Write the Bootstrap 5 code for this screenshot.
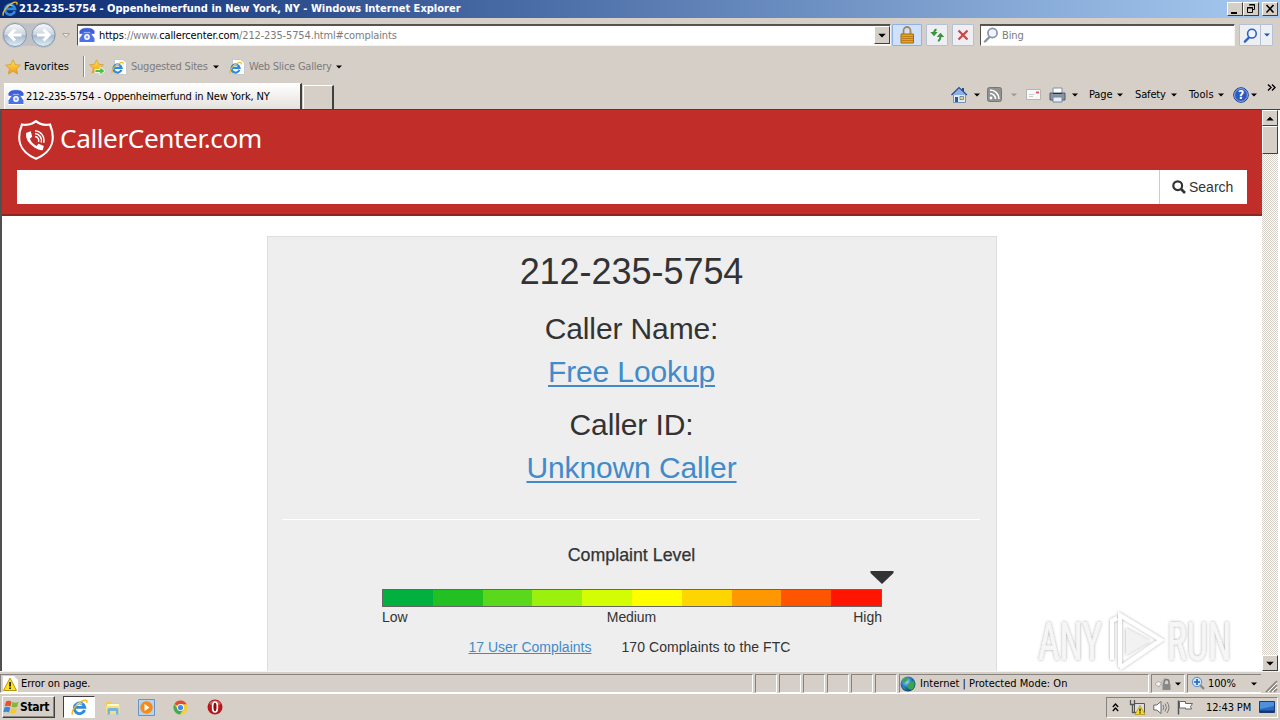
<!DOCTYPE html>
<html lang="en">
<head>
<meta charset="utf-8">
<meta name="viewport" content="width=device-width, initial-scale=1">
<title>212-235-5754 - Oppenheimerfund in New York, NY</title>
<link href="https://cdn.jsdelivr.net/npm/bootstrap@5.3.0/dist/css/bootstrap.min.css" rel="stylesheet">
<style>
:root{--face:#d5cfc8;--ui:"DejaVu Sans Condensed","DejaVu Sans",sans-serif}
body{width:1280px;height:720px;background:var(--face);font:11px/14px var(--ui);font-stretch:condensed;color:#000;letter-spacing:-.14px;white-space:nowrap;overflow:hidden}
svg{display:block;flex:none}
.fx{flex:none}
.titlebar{height:18px;background:linear-gradient(90deg,#0a2a72,#a6caf0);color:#fff;font-weight:700;padding-left:2px;padding-right:2px;letter-spacing:0}
.winbtn{width:16px;height:14px;background:var(--face);border:1px solid;border-color:#fff #404040 #404040 #fff}
.navrow{height:34px;padding-left:2px}
.sunk{border:1px solid;border-color:#55524e #f4f2ee #f4f2ee #55524e;box-shadow:inset 0 1px #555;background:#fff}
.addr{width:814px;height:22px;margin-left:7px}
.dim{color:#7c7c7c}
.raised{background:var(--face);border:1px solid;border-color:#fff #404040 #404040 #fff}
.toolbtn{height:22px;border:1px solid #b5c0d2;background:#edeff2;border-radius:1px}
.favrow{height:28px;padding-left:5px;padding-top:1px}
.tabrow{height:29px;padding-left:4px}
.tab-on{width:298px;height:26px;background:linear-gradient(#fff,#e4e1dd);border-right:2px solid #404040;border-left:1px solid #fff;border-top:1px solid #fff}
.tab-new{width:31px;height:24px;margin-left:1px;border:solid;border-width:1px 2px 0 1px;border-color:#fff #404040 #fff #fff}
.lbl{display:block;flex:none}
.viewport-box{height:562px;border-top:1px solid #404040;border-left:2px solid #505050;background:#fff;font-family:"Liberation Sans",Arial,sans-serif;letter-spacing:0;color:#333}
.site{width:1260px;overflow:hidden}
.masthead{height:106px;background:#c12e2a;border-bottom:2px solid #8e2522;padding:10px 15px 0}
.brandname{font:26.2px/36px "Noto Sans","Open Sans",sans-serif;letter-spacing:-.42px;color:#fff;margin:0 0 4px 5px}
.searchline{margin-top:10px;height:34px;background:#fff}
.searchbtn{width:88px;border-left:1px solid #ccc;font-size:14px;color:#333}
.report{width:730px;height:460px;margin:20px 0 0 265px;background:#eee;border:1px solid #ddd;padding:0 16px 0 15px;text-align:center}
.report a{color:#428bca}
.num{font-size:36px;line-height:40px;margin:15px 0 0;letter-spacing:-.04px}
.h30{font-size:30px;line-height:43px;text-underline-offset:3px;letter-spacing:-.12px}
.h30 a{text-decoration-thickness:2px}
.rule{height:1px;background:#fff;margin-top:30px}
.meter{width:500px;height:18px;border:1px solid #666;margin:0 0 0 99px}
.meter span{flex:1}
.f14{font-size:14px;line-height:20px}
.scroller{width:16px;background:repeating-conic-gradient(#fff 0 25%,#d5cfc8 0 50%) 0 0/2px 2px}
.statusrow{height:23px;border-top:1px solid #f5f3f0;padding-top:2px;border-bottom:1px solid #fff}
.cell{height:19px;border:1px solid;border-color:#87837e #fff #fff #87837e;margin-right:2px}
.taskrow{height:26px;padding-left:2px;padding-top:0}
.start{width:53px;height:22px;font-weight:700;font-size:12px;letter-spacing:-.3px;box-shadow:inset -1px -1px #8a8680}
.active-task{width:32px;height:22px;margin-left:8px;background:#fff;border:1px solid;border-color:#404040 #fff #fff #404040}
.tray{width:172px;height:21px;border:1px solid;border-color:#87837e #fff #fff #87837e}
.mark-any{position:absolute;left:1030px;top:604px}
</style>
</head>
<body class="d-flex flex-column">
<svg width="0" height="0" class="position-absolute">
<defs>
<linearGradient id="blueball" x1="0" y1="0" x2="0" y2="1"><stop offset="0" stop-color="#f8fafc"/><stop offset=".48" stop-color="#c9d3df"/><stop offset=".52" stop-color="#a9b9cc"/><stop offset="1" stop-color="#dcf0fa"/></linearGradient>
<linearGradient id="gold" x1="0" y1="0" x2="0" y2="1"><stop offset="0" stop-color="#ffe45a"/><stop offset="1" stop-color="#f09a10"/></linearGradient>
<radialGradient id="globe" cx=".4" cy=".35" r=".7"><stop offset="0" stop-color="#9ad4f8"/><stop offset=".5" stop-color="#2878c0"/><stop offset="1" stop-color="#0c3c70"/></radialGradient>
<symbol id="e" viewBox="0 0 16 16"><path d="M12.8 10.3A5 5 0 1 1 13 7.900H4.400" fill="none" stroke="#2f8ade" stroke-width="2.700"/><path d="M1.400 14.600C-.3 11.600 5.600 3.400 12 1.400c2.600-.8 3.600.2 2.700 2.200" fill="none" stroke="#f2b81e" stroke-width="1.400"/><path d="M5 5.200a4.500 4.500 0 0 1 5.500-.5" stroke="#9cd6f8" fill="none"/></symbol>
<symbol id="epage" viewBox="0 0 16 16"><path d="M3.500.500h8l4 3v12h-12z" fill="#fff" stroke="#c8c8c8"/><use href="#e" x="0" y="2.500" width="13" height="13"/></symbol>
<symbol id="phone" viewBox="0 0 16 16"><path d="M0 0h16v16H0z" fill="#fff"/><path d="M.8 6.500V4.200Q2 1.200 8 1.200t7.200 3v2.300h-3.700V4.700h-7v1.800z" fill="#3c5fe0" stroke="#2440b8" stroke-width=".5"/><path d="M4.500 5.500h7l4 6V15H.5v-3.500z" fill="#4c70ea"/><circle cx="8" cy="10" r="2.900" fill="#fff"/><circle cx="8" cy="10" r="1.400" fill="#87a3f5"/></symbol>
<symbol id="star" viewBox="0 0 16 16"><path d="M8 .8l2.200 4.800 5.200.6-3.900 3.500 1.100 5.300L8 12.300 3.400 15l1.100-5.300L.6 6.200l5.200-.6z" fill="url(#gold)" stroke="#d89a2a" stroke-width=".8"/></symbol>
<symbol id="dn" viewBox="0 0 6 4"><path d="M0 .5h6L3 3.500z"/></symbol>
<symbol id="lens" viewBox="0 0 16 16"><path d="M7 9.500L2 14.500" stroke="currentColor" stroke-width="2.400" stroke-linecap="round"/><circle cx="9.500" cy="6" r="4.600" fill="#eef5fd" stroke="currentColor" stroke-width="1.700"/></symbol>
</defs>
</svg>

<header class="titlebar fx d-flex align-items-center">
<svg width="16" height="16"><use href="#e"/></svg>
<span class="lbl" style="margin-left:1px">212-235-5754 - Oppenheimerfund in New York, NY - Windows Internet Explorer</span>
<div class="ms-auto d-flex fx">
<div class="winbtn"><svg width="14" height="12"><path d="M3 9h6v2H3z"/></svg></div>
<div class="winbtn"><svg width="14" height="12"><path d="M5.500 1.500h5v5h-2M5 2h6M3.500 4.500h5v5h-5zM3 5h6" fill="none" stroke="#000"/></svg></div>
<div class="winbtn" style="margin-left:3px"><svg width="14" height="12"><path d="M3.500 2l7 7.500M10.500 2l-7 7.500" stroke="#000" stroke-width="1.600"/></svg></div>
</div>
</header>

<nav class="navrow fx d-flex align-items-center">
<svg width="54" height="30" viewBox="0 0 54 30"><path d="M13 2q14 3 28 0a13 13 0 0 1 0 26q-14-5-28 0A13 13 0 0 1 13 2z" fill="#bfc1c5"/><g fill="url(#blueball)" stroke="#8797aa"><circle cx="13" cy="15" r="11.500"/><circle cx="41.500" cy="15" r="11.500"/></g><g fill="none" stroke="#fff" stroke-width="3"><path d="M19.500 15H8M13 9.500L7.500 15l5.500 5.500M35 15h11.500M41.500 9.500L47 15l-5.500 5.500"/></g></svg>
<svg width="8" height="5" viewBox="0 0 8 5" style="margin-left:6px"><path d="M.5.500h7L4 4.500z" fill="#e8e6e2" stroke="#a8a6a2"/></svg>
<div class="addr sunk fx d-flex align-items-center ps-1">
<svg width="16" height="16" style="margin-left:-3px"><use href="#phone"/></svg>
<span class="lbl" style="margin:2px 0 0 4px"><span>https</span><span class="dim">://www.</span><span>callercenter.com</span><span class="dim">/212-235-5754.html#complaints</span></span>
<div class="raised ms-auto d-flex align-items-center justify-content-center fx" style="width:16px;height:18px"><svg width="8" height="5"><use href="#dn"/></svg></div>
</div>
<div class="toolbtn fx d-flex align-items-center justify-content-center" style="width:30px;margin-left:1px;background:#cfe1fb;border-color:#8eb2e8"><svg width="16" height="18" viewBox="0 0 16 18"><path d="M4.500 8V4.500a3.500 3.500 0 0 1 7 0V8" fill="none" stroke="#a08a5c" stroke-width="1.800"/><path d="M2 8h12.500v9H2z" fill="#eaa420" stroke="#a06a10"/><path d="M2.500 10.500h11.500M2.500 12.500h11.500M2.500 14.500h11.500" stroke="#bf7d14"/></svg></div>
<div class="toolbtn fx d-flex align-items-center justify-content-center" style="width:22px;margin-left:4px"><svg width="14" height="14" viewBox="0 0 14 14"><g fill="none" stroke="#3a9440" stroke-width="2"><path d="M6.500 1.500Q4 2 4 6M8 13q2.500-1 2.500-5"/></g><path d="M.3 4h7.400L4 8.200zM6.800 9h7.400L10.500 4.800z" fill="#3a9440"/></svg></div>
<div class="toolbtn fx d-flex align-items-center justify-content-center" style="width:22px;margin-left:4px"><svg width="12" height="12" viewBox="0 0 12 12"><path d="M1.500 1.500l9 9M10.500 1.500l-9 9" stroke="#cf4444" stroke-width="2.200"/></svg></div>
<div class="sunk fx d-flex align-items-center" style="width:255px;height:22px;margin-left:6px;color:#8794a4"><svg width="16" height="18" viewBox="0 0 16 16" style="margin-left:2px"><use href="#lens"/></svg><span class="lbl dim" style="margin:2px 0 0 3px">Bing</span></div>
<div class="toolbtn fx d-flex align-items-center justify-content-center" style="width:22px;margin-left:4px;color:#2b60c4"><svg width="15" height="15"><use href="#lens"/></svg></div>
<div class="toolbtn fx d-flex align-items-center justify-content-center" style="width:13px;margin-left:-1px"><svg width="6" height="4" fill="#2456a8"><use href="#dn"/></svg></div>
</nav>

<nav class="favrow fx d-flex align-items-center">
<svg width="16" height="16"><use href="#star"/></svg><span class="lbl" style="width:59px;margin-left:3px;letter-spacing:.05px">Favorites</span>
<span class="fx" style="width:2px;height:21px;background:linear-gradient(90deg,#8c8a86 50%,#fff 50%);margin-right:4px"></span>
<svg width="17" height="16" viewBox="0 0 17 16" style="margin-right:6px"><use href="#star" width="15" height="15"/><path d="M6 10.500h5V8l5 4-5 4v-2.500H6z" fill="#4cc040" stroke="#fff" stroke-width=".8"/></svg>
<svg width="16" height="16" style="margin-left:-1px"><use href="#epage"/></svg><span class="lbl dim" style="width:83px;margin-left:4px;letter-spacing:-.22px">Suggested Sites</span>
<svg width="6" height="4" style="margin-left:-1px"><use href="#dn"/></svg>
<svg width="16" height="16" style="margin-left:10px"><use href="#epage"/></svg><span class="lbl dim" style="width:87px;margin-left:4px;letter-spacing:-.22px">Web Slice Gallery</span>
<svg width="6" height="4"><use href="#dn"/></svg>
</nav>

<nav class="tabrow fx d-flex align-items-end">
<div class="tab-on fx d-flex align-items-center"><svg width="16" height="16" style="margin-left:3px"><use href="#phone"/></svg><span class="lbl" style="margin-left:2px">212-235-5754 - Oppenheimerfund in New York, NY</span></div>
<div class="tab-new fx"></div>
<div class="ms-auto d-flex align-items-center fx align-self-start" style="width:329px;height:29px">
<svg width="17" height="17" viewBox="0 0 17 17"><path d="M2.500 8.500h12v8h-12z" fill="#dfeaf8" stroke="#7f92b0"/><path d="M11 2h2v3h-2z" fill="#26508c"/><path d="M.5 9L8 1.500 16 9" fill="#8fb0e0" stroke="#26508c" stroke-width="1.200"/><path d="M4 11h3v5H4z" fill="#235eaa"/><path d="M9 10.500h3.500v3H9z" fill="#f6d858" stroke="#486aa0" stroke-width=".7"/></svg>
<svg width="6" height="4" style="margin-left:6px"><use href="#dn"/></svg>
<svg width="15" height="15" viewBox="0 0 15 15" style="margin-left:7px"><rect x=".5" y=".5" width="14" height="14" rx="2" fill="#929292" stroke="#777"/><circle cx="4" cy="11" r="1.400" fill="#fff"/><path d="M3 6.500A5.500 5.500 0 0 1 8.500 12M3 3a9 9 0 0 1 9 9" fill="none" stroke="#fff" stroke-width="1.500"/></svg>
<svg width="6" height="4" fill="#999" style="margin-left:9px"><use href="#dn"/></svg>
<svg width="15" height="11" viewBox="0 0 15 11" style="margin-left:9px"><path d="M.5.500h14v10H.5z" fill="#f8f8f8" stroke="#b4b4b4"/><path d="M10 2.500h3v2h-3z" fill="#d4606c"/><path d="M3 5.500h5M3 7.500h4" stroke="#ccc"/></svg>
<svg width="17" height="16" viewBox="0 0 17 16" style="margin-left:8px"><path d="M4 1h9v6H4z" fill="#fff" stroke="#8090a4"/><path d="M1 6h15v7H1z" fill="#8a95a3" stroke="#505a68"/><path d="M4 6.500h9" stroke="#333"/><path d="M4 10h9v5H4z" fill="#e5f0fa" stroke="#73859b"/></svg>
<svg width="6" height="4" style="margin-left:6px"><use href="#dn"/></svg>
<span class="lbl" style="width:28px;margin-left:11px">Page</span><svg width="6" height="4"><use href="#dn"/></svg>
<span class="lbl" style="width:36px;margin-left:12px">Safety</span><svg width="6" height="4"><use href="#dn"/></svg>
<span class="lbl" style="width:29px;margin-left:12px;letter-spacing:.1px">Tools</span><svg width="6" height="4"><use href="#dn"/></svg>
<svg width="16" height="16" viewBox="0 0 16 16" style="margin-left:9px"><circle cx="8" cy="8" r="7.300" fill="#2c59bf" stroke="#1b3f8e"/><circle cx="8" cy="8" r="6.400" fill="none" stroke="#a9c1ef" stroke-width=".8"/><text x="8" y="12.300" text-anchor="middle" fill="#fff" font-weight="700" font-size="12">?</text></svg>
<svg width="6" height="4" style="margin-left:2px"><use href="#dn"/></svg>
<svg width="9" height="7" viewBox="0 0 9 7" class="align-self-start" style="margin:4px 0 0 10px"><path d="M1 .5l3 3-3 3M5 .5l3 3-3 3" fill="none" stroke="#000" stroke-width="1.400"/></svg>
</div>
</nav>

<main class="viewport-box fx d-flex">
<section class="site fx">
<div class="masthead">
<div class="d-flex align-items-center">
<svg width="38" height="40" viewBox="0 0 38 40"><path d="M19 1.200Q24.500 6 33 4.500C38.500 18 36.500 31.500 19 38.700 1.500 31.500-.5 18 5 4.500 13.500 6 19 1.200 19 1.200z" fill="none" stroke="#fff" stroke-width="2.200"/><path d="M9 13l4.800-1.700 1.400 5.500-2.300 1.900q1.700 4.500 6.600 7.300l2-2.300 5.300 2.300-1 4q-3.500.8-8-2.300Q8 21.500 9 13z" fill="#fff"/><path d="M18 16.500a4 4 0 0 1 3.500 5.500M18 13.500a7 7 0 0 1 6.200 9M18 10.700a9.600 9.600 0 0 1 8.600 12" fill="none" stroke="#fff" stroke-width="1.500"/></svg>
<span class="brandname">CallerCenter.com</span>
</div>
<div class="searchline d-flex justify-content-end"><div class="searchbtn d-flex align-items-center" style="padding-left:12px"><svg width="14" height="14" viewBox="0 0 14 14"><circle cx="5.700" cy="5.700" r="4.400" fill="none" stroke="#333" stroke-width="2.200"/><path d="M9 9l4 4" stroke="#333" stroke-width="2.600"/></svg><span style="margin-left:3px">Search</span></div></div>
</div>
<article class="report">
<h1 class="num fw-normal">212-235-5754</h1>
<div class="h30" style="margin-top:15px">Caller Name:<br><a href="#">Free Lookup</a></div>
<div class="h30" style="margin-top:10px">Caller ID:<br><a href="#">Unknown Caller</a></div>
<div class="rule"></div>
<div style="font-size:17.800px;line-height:20px;margin-top:25px;-webkit-text-stroke:.25px #333">Complaint Level</div>
<div class="d-flex" style="margin:6px 0 5px 587px"><svg width="24" height="13" viewBox="0 0 24 13"><path d="M.5 0h23v2L12 13 .5 2z" fill="#333"/></svg></div>
<div class="meter d-flex"><span style="background:#00b140"></span><span style="background:#22c022"></span><span style="background:#5ad91c"></span><span style="background:#9bf00e"></span><span style="background:#d3fd02"></span><span style="background:#ff0"></span><span style="background:#ffd500"></span><span style="background:#ff9800"></span><span style="background:#ff5500"></span><span style="background:#ff1500"></span></div>
<div class="d-flex justify-content-between f14" style="width:500px;margin-left:99px"><span>Low</span><span style="letter-spacing:-.1px;padding-left:2px">Medium</span><span>High</span></div>
<div class="d-flex justify-content-center f14" style="margin-top:10px;gap:30px;padding-right:4px"><a href="#">17 User Complaints</a><span style="letter-spacing:.07px">170 Complaints to the FTC</span></div>
</article>
</section>
<aside class="scroller fx d-flex flex-column">
<div class="raised d-flex align-items-center justify-content-center" style="height:16px"><svg width="8" height="5" style="transform:scaleY(-1)"><use href="#dn"/></svg></div>
<div class="raised" style="height:28px"></div>
<div class="raised d-flex align-items-center justify-content-center mt-auto" style="height:16px"><svg width="8" height="5"><use href="#dn"/></svg></div>
</aside>
</main>

<footer class="statusrow fx d-flex">
<div class="cell fx d-flex align-items-center" style="width:753px"><svg width="16" height="16" viewBox="0 0 16 16" style="margin-left:1px"><path d="M1 0h11l4 4v12H1z" fill="#fff"/><path d="M8 2l6.500 12.500h-13z" fill="#ffe022" stroke="#b8960c"/><path d="M7.300 6h1.500v4.500H7.300zM7.300 11.500h1.500V13H7.300z"/></svg><span class="lbl" style="margin-left:3px;letter-spacing:-.08px">Error on page.</span></div>
<div class="cell fx" style="width:22px"></div><div class="cell fx" style="width:22px"></div><div class="cell fx" style="width:22px"></div><div class="cell fx" style="width:22px"></div><div class="cell fx" style="width:22px"></div><div class="cell fx" style="width:22px"></div>
<div class="cell fx d-flex align-items-center" style="width:250px"><svg width="16" height="16" viewBox="0 0 16 16"><circle cx="8" cy="8" r="7.500" fill="url(#globe)"/><path d="M2 5q3-4 6-3l-1 3-3 2zM9 7l5-2q2 5-2 9l-3-1-2-3zM3 10l3 4-3-2z" fill="#37a747"/></svg><span class="lbl" style="margin-left:4px;letter-spacing:.02px">Internet | Protected Mode: On</span></div>
<div class="cell fx d-flex align-items-center" style="width:34px"><svg width="18" height="15" viewBox="0 0 18 15" style="margin-left:2px"><path d="M1 8q3-4 6-1l4-5v4q-5 1-6 5z" fill="#f3f3f3" stroke="#aaa"/><path d="M10 8V6a2.500 2.500 0 0 1 5 0v2" fill="none" stroke="#777" stroke-width="1.400"/><path d="M8.500 8h8v6h-8z" fill="#888"/></svg><svg width="6" height="4" style="margin-left:3px"><use href="#dn"/></svg></div>
<div class="cell fx d-flex align-items-center" style="width:74px;border-right:0"><svg width="15" height="15" viewBox="0 0 15 15" style="margin-left:3px"><path d="M8 8l5 5" stroke="#8b8780" stroke-width="2.400"/><circle cx="6" cy="6" r="4.700" fill="#cfe4fb" stroke="#5c8cc8"/><path d="M3 6h6M6 3v6" stroke="#1766c8" stroke-width="1.600"/></svg><span class="lbl" style="width:43px;margin-left:2px">100%</span><svg width="6" height="4"><use href="#dn"/></svg></div>
<svg width="15" height="15" class="align-self-end" viewBox="0 0 15 15"><path d="M3 14L14 3M7 14l7-7M11 14l3-3" stroke="#87837e" stroke-width="1.700"/><path d="M5 14l9-9M9 14l5-5" stroke="#fff"/></svg>
</footer>

<footer class="taskrow fx d-flex align-items-center">
<div class="start raised fx d-flex align-items-center"><svg width="17" height="16" viewBox="0 0 17 16"><path d="M3 2.500q3-1.500 5.500.2L7.500 7.500Q5 6 1.800 7.300z" fill="#e8522c"/><path d="M9.500 3q3 1.500 6-.2l-1.300 5Q11 9 8.500 7.800z" fill="#7cba3c"/><path d="M1.500 8.500Q4.500 7 7.300 8.700L6 13.500Q3 12 .3 13.300z" fill="#3c86d8"/><path d="M8.200 9q3 1.500 5.800.2l-1.300 4.500Q10 15 7 13.800z" fill="#f8c830"/></svg><span class="lbl">Start</span></div>
<div class="active-task fx d-flex align-items-center justify-content-center"><svg width="17" height="17" viewBox="0 0 16 16"><use href="#e"/></svg></div>
<svg width="16" height="15" viewBox="0 0 16 15" style="margin-left:10px"><path d="M1 2h5l1 1.500h7V14H1z" fill="#edc958"/><path d="M2 4h12v4H2z" fill="#fff8cf"/><path d="M1 6h14v8H1z" fill="#f5df85"/><path d="M2.500 14.500v-5q0-1.500 1.500-1.500h8q1.500 0 1.500 1.500v5H11V11H5v3.500z" fill="#75b5dd"/></svg>
<svg width="17" height="17" viewBox="0 0 17 17" style="margin-left:17px"><path d="M.5.500h16v16H.5z" fill="#b8d3ee" stroke="#6a94c2"/><circle cx="8.500" cy="8.500" r="6.200" fill="#f58a16"/><path d="M6.500 5l5 3.500-5 3.500z" fill="#fff"/></svg>
<svg width="15" height="15" viewBox="0 0 16 16" style="margin-left:18px"><circle cx="8" cy="8" r="7.500" fill="#f7cf35"/><path d="M8 8L1.500 4.200A7.500 7.500 0 0 1 14.600 4.500H8z" fill="#dd4b3c"/><path d="M1.500 4.200A7.500 7.500 0 0 0 7.500 15.500L11 9.800 5 10z" fill="#4ba859"/><circle cx="8" cy="8" r="3.700" fill="#fff"/><circle cx="8" cy="8" r="2.800" fill="#4688ee"/></svg>
<svg width="16" height="16" viewBox="0 0 16 16" style="margin-left:19px"><circle cx="8" cy="8" r="7.500" fill="#b5171c"/><path d="M2 5a7 7 0 0 1 12 0q-6 3-12 0z" fill="#d95a58"/><ellipse cx="8" cy="8" rx="2.400" ry="5" fill="#8d0b10" stroke="#fff" stroke-width="1.700"/></svg>
<div class="tray ms-auto fx d-flex align-items-center" style="margin-right:2px">
<svg width="7" height="9" viewBox="0 0 7 9" style="margin-left:5px"><path d="M.8 4l2.700-3 2.700 3M.8 8l2.700-3 2.700 3" fill="none" stroke="#000" stroke-width="1.300"/></svg>
<svg width="17" height="17" viewBox="0 0 17 17" style="margin-left:10px"><path d="M5.500 4.500h10v9h-10z" fill="#ddd" stroke="#555"/><path d="M1.500 1v4.500h4V1M3.500 5.500v8h3" fill="none" stroke="#555" stroke-width="1.300"/><path d="M11 6.500l5 9H6z" fill="#ffde1f" stroke="#a78c10" stroke-width=".7"/><path d="M10.400 9.500h1.200v3h-1.200zM10.400 13.300h1.200v1.200h-1.200z"/></svg>
<svg width="17" height="15" viewBox="0 0 17 15" style="margin-left:7px"><path d="M.8 5h3L8 1.500v12L3.800 10h-3z" fill="#fff" stroke="#666"/><path d="M10 5q1.500 2.500 0 5M12 3.500q3 4 0 8M14 2q4 5.500 0 11" fill="none" stroke="#777"/></svg>
<svg width="17" height="15" viewBox="0 0 17 15" style="margin-left:7px"><path d="M1.500.5v14" stroke="#555" stroke-width="1.500"/><path d="M2.500 1.500h6v2h7l-2 3 1 2.500H8.500V8h-6z" fill="#fff" stroke="#666"/></svg>
<span class="lbl" style="width:53px;margin-left:12px;padding-top:1px">12:43 PM</span>
<svg width="17" height="13" viewBox="0 0 17 13"><path d="M.5.500h15v11H.5z" fill="#2868bd" stroke="#1a3d78"/><path d="M1 1h14v4L1 8z" fill="#4c90de"/><path d="M1 10.500h14" stroke="#14366c" stroke-width="2"/></svg>
</div>
</footer>

<svg class="mark-any" width="250" height="76" viewBox="0 0 250 76"><defs><filter id="soft" x="-10%" y="-10%" width="120%" height="120%"><feDropShadow dx="0" dy="0" stdDeviation="1.800" flood-color="#000" flood-opacity=".36"/></filter></defs><g filter="url(#soft)" fill="#f6f6f6" font-family="Roboto,sans-serif" font-size="53"><text transform="translate(8 56) scale(.71 1)">ANY</text><text transform="translate(137 56) scale(.71 1)">RUN</text><path d="M82 56V17l5-3M90 63V11l41 25-41 28" fill="none" stroke="#fff" stroke-width="4"/><path d="M96 24l24 13-24 14z" fill="#f2f2f2"/></g></svg>
<script src="https://cdn.jsdelivr.net/npm/bootstrap@5.3.0/dist/js/bootstrap.bundle.min.js"></script>
</body>
</html>
